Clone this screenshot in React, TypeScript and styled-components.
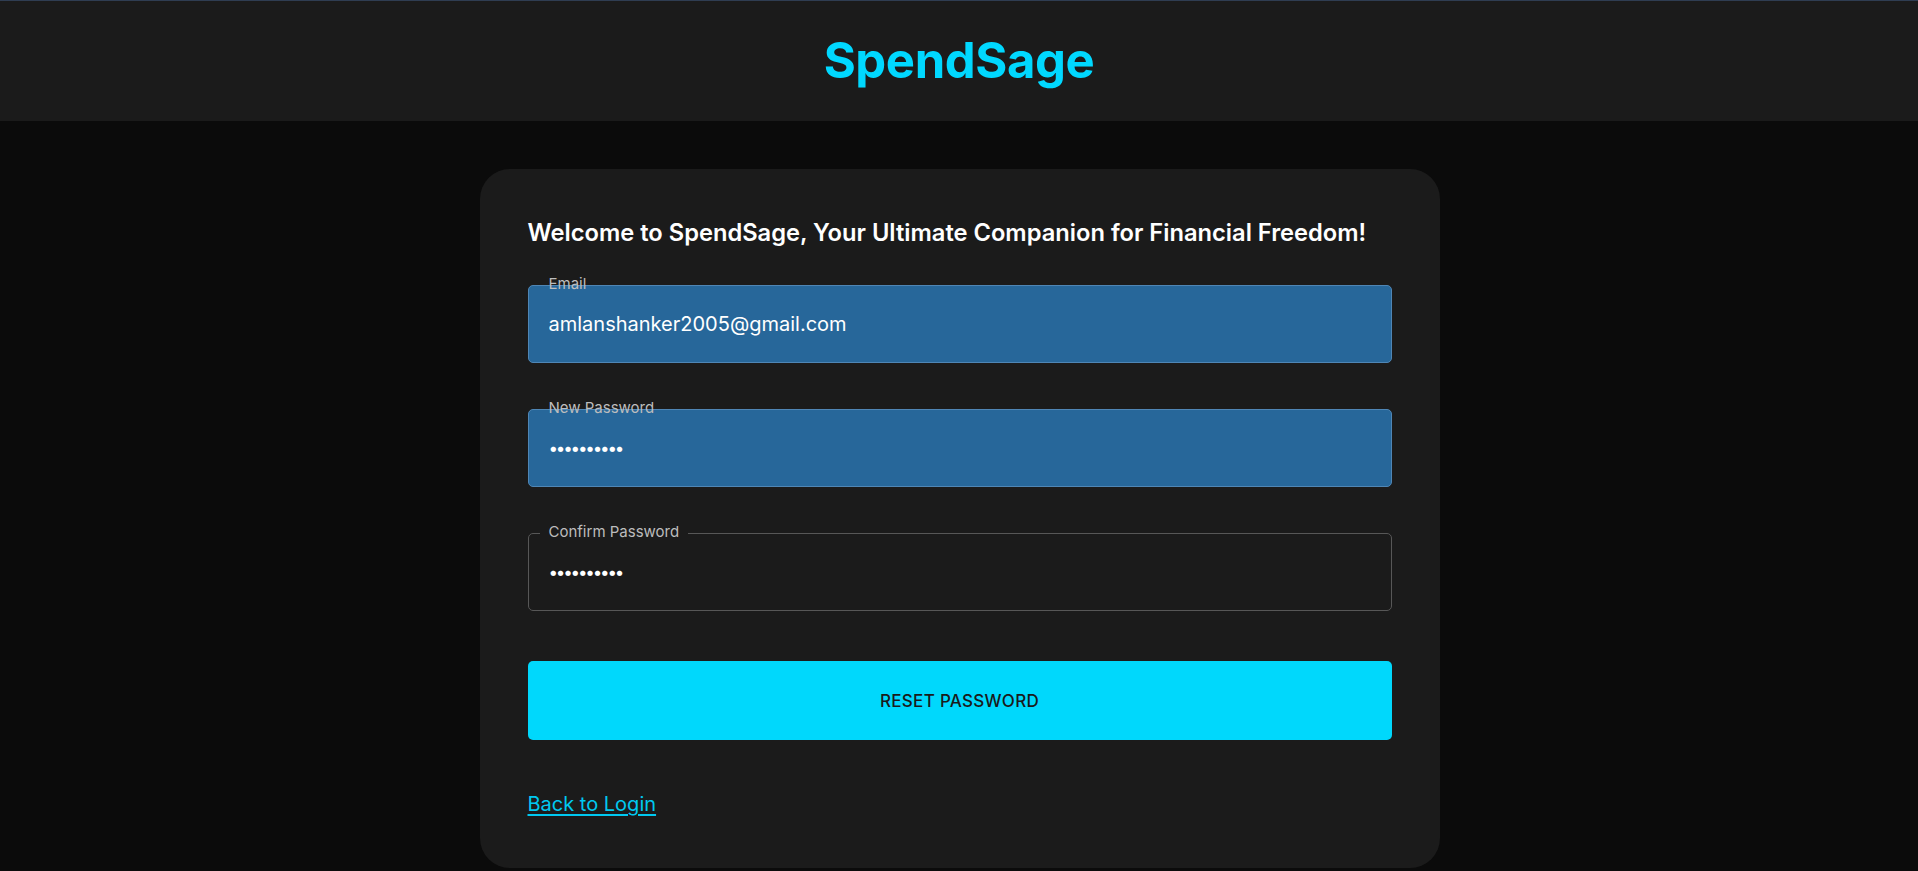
import React from "react";
import styled, { createGlobalStyle } from "styled-components";

const GlobalStyle = createGlobalStyle`
  html, body {
    margin: 0;
    padding: 0;
    background: #0b0b0b;
    font-family: Inter, "Noto Sans", "Liberation Sans", sans-serif;
  }
  * {
    box-sizing: border-box;
  }
`;

const Page = styled.div`
  min-height: 100vh;
  background: #0b0b0b;
  display: flex;
  flex-direction: column;
  align-items: center;
`;

const Header = styled.header`
  width: 100%;
  height: 121px;
  border-top: 1px solid #2f3d52;
  background: #1b1b1b;
  display: flex;
  align-items: center;
  justify-content: center;
`;

const Logo = styled.h1`
  margin: 0;
  color: #00d8ff;
  font-size: 49px;
  font-weight: 700;
  letter-spacing: -0.4px;
  line-height: 1;
  padding-bottom: 2px;
`;

const Card = styled.main`
  width: 960px;
  margin-top: 48px;
  margin-left: 1px;
  background: #1b1b1b;
  border-radius: 30px;
  padding: 48px 48px 50px;
  display: flex;
  flex-direction: column;
`;

const Title = styled.h2`
  margin: 0 0 36px;
  color: #ffffff;
  font-size: 23.7px;
  font-weight: 600;
  line-height: 32px;
`;

const Form = styled.form`
  display: flex;
  flex-direction: column;
`;

const Field = styled.div`
  position: relative;
  margin-bottom: 46px;
`;

const Label = styled.label<{ $filled?: boolean }>`
  position: absolute;
  left: 12px;
  top: -10px;
  padding: 0 9px;
  font-size: 15px;
  line-height: 18px;
  color: #bdbdbd;
  background: ${(p) => (p.$filled ? "transparent" : "#1b1b1b")};
`;

const Input = styled.input<{ $filled?: boolean }>`
  display: block;
  width: 100%;
  height: 78px;
  padding: 0 20px;
  border-radius: 5px;
  border: 1px solid ${(p) => (p.$filled ? "#4f86b5" : "#575757")};
  background: ${(p) => (p.$filled ? "#27679a" : "#1b1b1b")};
  color: #ffffff;
  font-family: inherit;
  font-size: 20px;
  outline: none;

  &[type="password"] {
    font-size: 17px;
    letter-spacing: -2.2px;
  }
`;

const SubmitButton = styled.button`
  margin-top: 4px;
  height: 79px;
  border: none;
  border-radius: 5px;
  background: #00d8fc;
  color: #1a1a1a;
  font-family: inherit;
  font-size: 17px;
  font-weight: 500;
  letter-spacing: 0.3px;
  text-transform: uppercase;
  cursor: pointer;
`;

const BackLink = styled.a`
  margin-top: 50px;
  align-self: flex-start;
  color: #00c8f0;
  font-size: 20px;
  line-height: 28px;
  text-decoration: underline;
  text-underline-offset: 3px;
`;

interface FieldDef {
  id: string;
  label: string;
  type: string;
  value: string;
  filled: boolean;
}

const fields: Array<FieldDef> = [
  { id: "email", label: "Email", type: "email", value: "amlanshanker2005@gmail.com", filled: true },
  { id: "password", label: "New Password", type: "password", value: "secret1234", filled: true },
  { id: "confirm", label: "Confirm Password", type: "password", value: "secret1234", filled: false },
];

const App = () => {
  return (
    <Page>
      <GlobalStyle />
      <Header>
        <Logo>SpendSage</Logo>
      </Header>
      <Card>
        <Title>Welcome to SpendSage, Your Ultimate Companion for Financial Freedom!</Title>
        <Form onSubmit={(e) => e.preventDefault()}>
          {fields.map((f) => (
            <Field key={f.id}>
              <Label htmlFor={f.id} $filled={f.filled}>
                {f.label}
              </Label>
              <Input id={f.id} type={f.type} defaultValue={f.value} $filled={f.filled} />
            </Field>
          ))}
          <SubmitButton type="submit">Reset Password</SubmitButton>
        </Form>
        <BackLink href="#">Back to Login</BackLink>
      </Card>
    </Page>
  );
};

export default App;
